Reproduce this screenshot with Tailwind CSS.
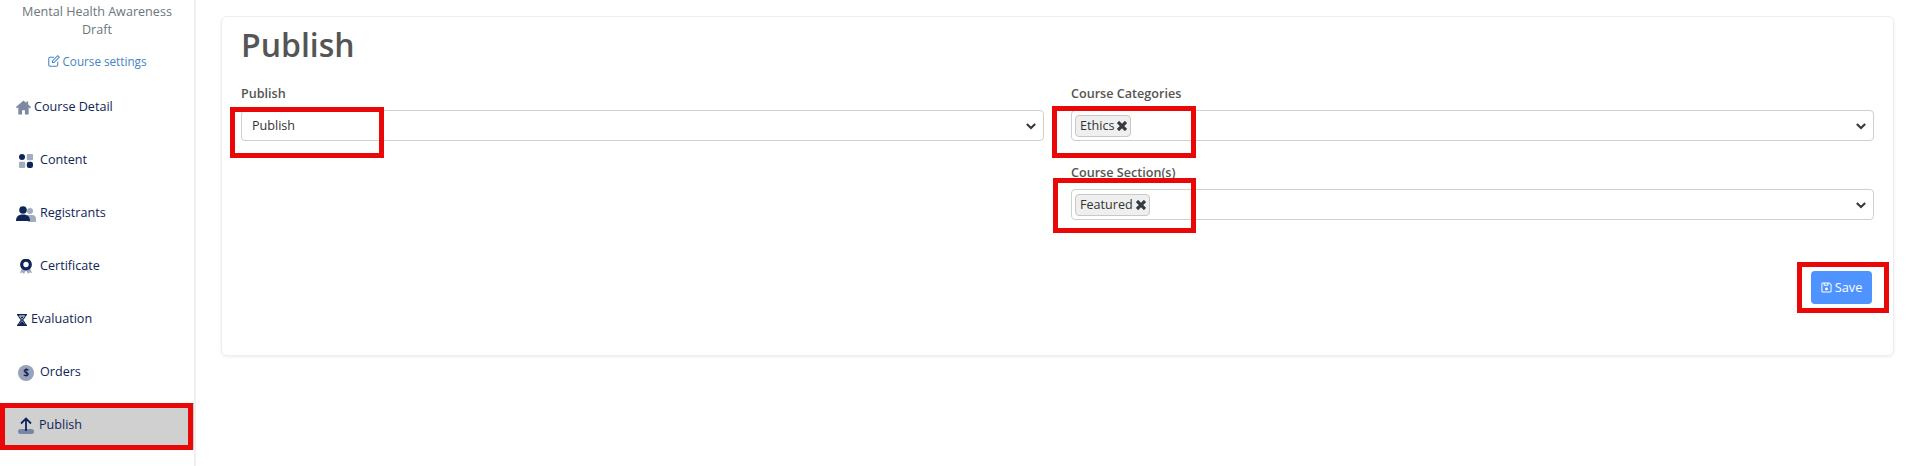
<!DOCTYPE html>
<html lang="en">
  <head>
    <meta charset="UTF-8" />
    <title>Publish</title>
    <script src="https://cdn.jsdelivr.net/npm/@tailwindcss/browser@4"></script>
  </head>
  <body class="bg-white h-[466px] overflow-hidden font-['Open_Sans',sans-serif] text-[#555555]">
    <div class="flex h-[466px] relative">
      <!-- Sidebar -->
      <aside class="w-[196px] shrink-0 border-r-2 border-[#f0f0f0] h-full">
        <div class="text-center text-[12.6px] leading-[18px] text-[#6c757d] pt-[3px]">
          <p>Mental Health Awareness</p>
          <p>Draft</p>
          <a href="#" class="mt-[14px] flex items-center justify-center gap-[2px] pl-[1px] text-[11.7px] leading-[16px] text-[#4484c4]">
            <svg class="w-[12px] h-[12px]" fill="none" stroke="currentColor" stroke-width="1.4" viewBox="0 0 16 16">
              <path d="M13 9v4a2 2 0 0 1-2 2H3a2 2 0 0 1-2-2V5a2 2 0 0 1 2-2h5" />
              <path d="M6 8l7-7 2 2-7 7H6z" />
            </svg>
            Course settings
          </a>
        </div>
        <nav class="mt-[12px] text-[12.6px] font-[450] text-[#0f2557]">
          <a href="#" class="flex items-center h-[53px] pl-[16px] gap-[3px]">
            <svg class="w-[15px] h-[15px]" viewBox="0 0 16 16"><path fill="#7d88a3" d="M8 .5 0 7.500 1 9l1.500-1.200V15.500H6.500V11h3v4.500h4V7.800L15 9l1-1.500-3-2.600V1.500h-2v1.600z" /></svg>
            Course Detail
          </a>
          <a href="#" class="flex items-center h-[53px] pl-[19px] gap-[7px]">
            <svg class="w-[14px] h-[14px]" viewBox="0 0 14 14">
              <circle cx="3" cy="3" r="3" fill="#0f2557" /><rect x="7.800" y="0" width="6.200" height="6.200" rx="1" fill="#a3abc0" />
              <rect x="0" y="7.800" width="6.200" height="6.200" rx="1" fill="#a3abc0" /><rect x="7.800" y="7.800" width="6.200" height="6.200" rx="2.200" fill="#0f2557" />
            </svg>
            Content
          </a>
          <a href="#" class="flex items-center h-[53px] pl-[16px] gap-[4px]">
            <svg class="w-[20px] h-[16px]" viewBox="0 0 20 16">
              <circle cx="14" cy="5" r="3" fill="#a3abc0" /><path fill="#a3abc0" d="M11 9h5a4 4 0 0 1 4 4v3h-8z" />
              <circle cx="7" cy="4" r="3.800" fill="#0f2557" /><path fill="#0f2557" d="M0 15c0-4 2-6.500 7-6.500S14 11 14 15z" />
            </svg>
            Registrants
          </a>
          <a href="#" class="flex items-center h-[53px] pl-[19px] gap-[7px]">
            <svg class="w-[14px] h-[16px]" viewBox="0 0 14 16">
              <path fill="#a3abc0" d="M3 9 1 14l2.500-.5L5 15l2-4 2 4 1.500-1.500L13 14l-2-5z" />
              <circle cx="7" cy="5.500" r="4.300" fill="none" stroke="#0f2557" stroke-width="3.200" />
            </svg>
            Certificate
          </a>
          <a href="#" class="flex items-center h-[53px] pl-[17px] gap-[4px]">
            <svg class="w-[10px] h-[12px]" viewBox="0 0 10 12">
              <path fill="none" stroke="#0f2557" stroke-width="1.400" d="M0 .7h10M0 11.300h10" />
              <path fill="none" stroke="#0f2557" stroke-width="1.200" d="M1.500 1c0 2.500 2.500 4 3 5-.5 1-3 2.500-3 5M8.500 1c0 2.500-2.500 4-3 5 .5 1 3 2.500 3 5" />
              <path fill="#0f2557" d="M2 11c.5-1.700 2-3 3-4 1 1 2.500 2.300 3 4zM3 2.500h4L5 5z" />
            </svg>
            Evaluation
          </a>
          <a href="#" class="flex items-center h-[53px] pl-[18px] gap-[6px]">
            <span class="w-[16px] h-[16px] rounded-full bg-[#98a2bb] flex items-center justify-center text-[10px] font-bold text-[#0f2557]">$</span>
            Orders
          </a>
          <a href="#" class="flex items-center h-[47px] mt-[4px] pl-[18px] gap-[5px] bg-[#d0d0d0] border-t border-[#bdbdbd] pb-[4px]">
            <svg class="w-[16px] h-[17px]" viewBox="0 0 16 17">
              <rect x="0" y="12" width="16" height="5" rx="2.500" fill="#7c86a3" />
              <path fill="none" stroke="#0f2557" stroke-width="1.800" d="M8 14V2M3 6.500 8 1.500 13 6.500" />
            </svg>
            Publish
          </a>
        </nav>
      </aside>

      <!-- Main card -->
      <main class="flex-1 pl-[25px] pr-[19px] pt-[16px]">
        <div class="h-[340px] border border-[#eeeeee] rounded-[6px] shadow-[0_1px_3px_rgba(0,0,0,0.08)] px-[19px]">
          <h1 class="text-[32px] leading-[44px] font-semibold text-[#555555] mt-[6px]">Publish</h1>
          <div class="grid grid-cols-2 gap-x-[27px] mt-[17px]">
            <div>
              <label class="block text-[12.6px] leading-[20px] font-[550] mb-[6px]">Publish</label>
              <div class="h-[31px] border border-[#cfcfcf] rounded-[4px] flex items-center justify-between pl-[10px] pr-[7px] text-[12.6px] leading-[20px] text-[#333333]">
                <span class="pt-[1px]">Publish</span>
                <svg class="w-[10px] h-[10px]" fill="none" stroke="#343a40" stroke-width="2.500" viewBox="0 0 12 12"><path d="M1 3.500 6 8.500 11 3.500" /></svg>
              </div>
            </div>
            <div>
              <label class="block text-[12.6px] leading-[20px] font-[550] mb-[6px]">Course Categories</label>
              <div class="h-[31px] border border-[#cfcfcf] rounded-[4px] flex items-center justify-between pl-[3px] pr-[7px]">
                <span class="h-[22px] flex items-center gap-[3px] bg-[#efefef] border border-[#c8c8c8] rounded-[4px] pl-[4px] pr-[3px] text-[12.6px] text-[#333333]">
                  <span class="pt-[1px]">Ethics</span>
                  <svg class="w-[10px] h-[10px]" fill="none" stroke="#343a40" stroke-width="3.200" viewBox="0 0 10 10"><path d="M1 1l8 8M9 1l-8 8" /></svg>
                </span>
                <svg class="w-[10px] h-[10px]" fill="none" stroke="#343a40" stroke-width="2.500" viewBox="0 0 12 12"><path d="M1 3.500 6 8.500 11 3.500" /></svg>
              </div>
              <label class="block text-[12.6px] leading-[20px] font-[550] mt-[22px] mb-[6px]">Course Section(s)</label>
              <div class="h-[31px] border border-[#cfcfcf] rounded-[4px] flex items-center justify-between pl-[3px] pr-[7px]">
                <span class="h-[22px] flex items-center gap-[3px] bg-[#efefef] border border-[#c8c8c8] rounded-[4px] pl-[4px] pr-[3px] text-[12.6px] text-[#333333]">
                  <span class="pt-[1px]">Featured</span>
                  <svg class="w-[10px] h-[10px]" fill="none" stroke="#343a40" stroke-width="3.200" viewBox="0 0 10 10"><path d="M1 1l8 8M9 1l-8 8" /></svg>
                </span>
                <svg class="w-[10px] h-[10px]" fill="none" stroke="#343a40" stroke-width="2.500" viewBox="0 0 12 12"><path d="M1 3.500 6 8.500 11 3.500" /></svg>
              </div>
              <div class="flex justify-end mt-[51px] pr-[2px]">
                <button class="h-[33px] w-[61px] bg-[#4f93ff] rounded-[4px] text-white text-[12.8px] flex items-center justify-center gap-[3px]">
                  <svg class="w-[11px] h-[11px]" fill="none" stroke="currentColor" stroke-width="1.100" viewBox="0 0 12 12">
                    <path d="M1 2a1 1 0 0 1 1-1h7l2 2v7a1 1 0 0 1-1 1H2a1 1 0 0 1-1-1z" /><path d="M3.500 1v2.500h4V1" /><circle cx="6" cy="7.500" r="1" fill="currentColor" />
                  </svg>
                  Save
                </button>
              </div>
            </div>
          </div>
        </div>
      </main>

      <!-- Red annotation boxes -->
      <div class="absolute left-0 top-[403px] w-[193px] h-[47px] border-[5px] border-[#e90707]"></div>
      <div class="absolute left-[230px] top-[107px] w-[154px] h-[51px] border-[5px] border-[#e90707]"></div>
      <div class="absolute left-[1052px] top-[106px] w-[144px] h-[52px] border-[5px] border-[#e90707]"></div>
      <div class="absolute left-[1053px] top-[178px] w-[143px] h-[55px] border-[5px] border-[#e90707]"></div>
      <div class="absolute left-[1797px] top-[262px] w-[92px] h-[51px] border-[5px] border-[#e90707]"></div>
    </div>
  </body>
</html>
